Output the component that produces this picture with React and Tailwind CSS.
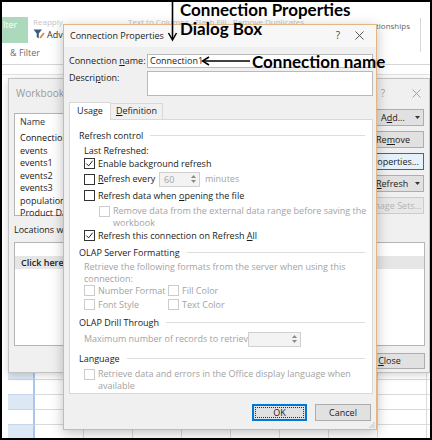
import React from "react";

function Box({ checked = false, disabled = false }) {
  return (
    <span
      className={
        disabled
          ? "relative block w-[11px] h-[11px] shrink-0 border border-[#cccccc] bg-white"
          : "relative block w-[11px] h-[11px] shrink-0 border border-[#333333] bg-white"
      }
    >
      {checked && (
        <svg viewBox="0 0 9 9" className="absolute left-0 top-0 w-[9px] h-[9px]">
          <path d="M1.4 4.6 L3.6 6.9 L7.7 1.7" fill="none" stroke="#222" strokeWidth="1" />
        </svg>
      )}
    </span>
  );
}

function CheckRow({ checked, disabled, children, className = "" }) {
  return (
    <div className={`flex items-center gap-[3px] h-[12px] ${className}`}>
      <Box checked={checked} disabled={disabled} />
      <span className={disabled ? "text-[#a3a3a3] whitespace-nowrap" : "text-[#1a1a1a] whitespace-nowrap"}>
        {children}
      </span>
    </div>
  );
}

function Heading({ children, className = "" }) {
  return (
    <div className={`flex items-center h-[12px] pl-[9px] pr-[7px] ${className}`}>
      <span className="whitespace-nowrap text-[#1a1a1a]">{children}</span>
      <span className="ml-[7px] flex-1 h-px bg-[#dddddd]" />
    </div>
  );
}

function Spin({ value = "", className = "" }) {
  return (
    <div className={`flex h-[15px] border border-[#d0d0d0] bg-[#f3f3f3] ${className}`}>
      <span className="flex-1 pl-[4px] leading-[13px] text-[#a3a3a3]">{value}</span>
      <span className="flex w-[11px] flex-col items-center justify-center gap-[2px]">
        <svg width="5" height="3" viewBox="0 0 5 3">
          <path d="M0 3 L2.5 0 L5 3Z" fill="#8a8a8a" />
        </svg>
        <svg width="5" height="3" viewBox="0 0 5 3">
          <path d="M0 0 L2.5 3 L5 0Z" fill="#8a8a8a" />
        </svg>
      </span>
    </div>
  );
}

function Caret() {
  return (
    <svg width="5" height="3" viewBox="0 0 5 3" className="shrink-0">
      <path d="M0 0 L2.5 3 L5 0Z" fill="#333" />
    </svg>
  );
}

function U({ children }) {
  return <span className="underline underline-offset-[1px]">{children}</span>;
}

function XIcon({ color = "#333" }) {
  return (
    <svg width="9" height="9" viewBox="0 0 9 9">
      <path d="M0.5 0.5 L8.5 8.5 M8.5 0.5 L0.5 8.5" stroke={color} strokeWidth="0.9" />
    </svg>
  );
}

export default function App() {
  const cols = [0, 1, 2, 3, 4, 5, 6, 7, 8];
  const rows = [0, 1, 2, 3, 4];
  return (
    <div className="relative w-[432px] h-[440px] overflow-hidden bg-white font-['Open_Sans',sans-serif] text-[9px] text-[#1a1a1a]">
      {/* ===== Excel background ===== */}
      <div className="flex flex-col w-full h-full">
        {/* ribbon */}
        <div className="relative flex h-[46px] pt-[17px] pl-[2px]">
          <div className="w-[26px] h-[26px] bg-[#acd9bb] pl-[1px] pt-[2px] text-white leading-[12px]">lter</div>
          <div className="ml-[5px] flex flex-col">
            <span className="text-[#c4c4c4] leading-[10px] text-[8px]">Reapply</span>
            <div className="mt-[1px] flex items-center gap-[2px]">
              <svg width="12" height="11" viewBox="0 0 12 11">
                <path d="M0.5 0.5 H9 L5.8 4.5 V9.5 L3.7 8 V4.5 Z" fill="#3d5a80" />
                <path d="M7 9 L11 4" stroke="#d9822b" strokeWidth="1.6" />
              </svg>
              <span className="text-[#333]">Advanced</span>
            </div>
          </div>
          <div className="ml-[40px] text-[#c4c4c4] text-[8px] leading-[10px]">Text to Columns &nbsp; Flash Fill &nbsp; Remove Duplicates</div>
          <div className="flex-1" />
          <div className="mt-[4px] flex items-start">
            <span className="text-[#666] text-[8px] leading-[10px]">What-If Relationships</span>
            <span className="ml-[10px] mr-[11px] mt-[-3px] w-px h-[34px] bg-[#d8d8d8]" />
          </div>
        </div>
        <div className="h-[19px] border-b border-[#d6d6d6] pl-[10px] text-[#6b6b6b] leading-[13px]">&amp; Filter</div>
        <div className="h-[10px] border-b border-[#e3e3e3]" />
        <div className="flex-1" />
        {/* sheet grid */}
        <div className="flex flex-col pl-[8px]">
          {rows.map((r) => (
            <div key={r} className="flex h-[15px]">
              <div
                className={
                  r % 2 === 0
                    ? "w-[27px] shrink-0 bg-[#dde8f5] border-b border-[#c6d6ea] border-r-2 border-r-[#a9c7ea]"
                    : "w-[27px] shrink-0 bg-white border-b border-[#c6d6ea] border-r-2 border-r-[#a9c7ea]"
                }
              />
              {cols.map((c) => (
                <div key={c} className="w-[49px] shrink-0 border-b border-r border-[#dadada]" />
              ))}
            </div>
          ))}
        </div>
      </div>

      {/* ===== Workbook Connections dialog (behind) ===== */}
      <div className="absolute left-[8px] top-[78px] w-[422px] h-[295px] bg-[#f0f0f0] border border-[#c2c2c2] shadow-[0_2px_8px_rgba(0,0,0,0.18)] flex flex-col">
        <div className="flex items-center h-[28px] pl-[7px]">
          <span className="text-[#9a9a9a] text-[10px]">Workbook Connections</span>
          <span className="flex-1" />
          <span className="text-[#a0a0a0] text-[10px] mr-[27px]">?</span>
          <span className="mr-[8px]">
            <XIcon color="#9a9a9a" />
          </span>
        </div>
        <div className="flex items-start pl-[5px] mt-[2px]">
          <div className="w-[340px] h-[103px] mt-[4px] bg-white border border-[#b5b5b5] pl-[5px] pt-[2px] leading-[12.5px]">
            <div className="text-[#333] h-[16px]">Name</div>
            <div className="text-[#111]">Connection</div>
            <div>events</div>
            <div>events1</div>
            <div>events2</div>
            <div>events3</div>
            <div>population</div>
            <div>Product Data</div>
          </div>
          <div className="ml-[5px] w-[65px] flex flex-col gap-[5px]">
            <div className="flex items-center h-[17px] border border-[#adadad] bg-[#e1e1e1] pl-[21px] pr-[3px]">
              <span className="flex-1">
                A<U>d</U>d...
              </span>
              <Caret />
            </div>
            <div className="flex items-center justify-center h-[17px] border border-[#adadad] bg-[#e1e1e1] pl-[3px]">
              Re<U>m</U>ove
            </div>
            <div className="flex items-center justify-center h-[17px] border border-[#0078d7] bg-[#e5f1fb]">
              <span className="pl-[4px]">Properties...</span>
            </div>
            <div className="flex items-center h-[17px] border border-[#adadad] bg-[#e1e1e1] pl-[16px] pr-[3px]">
              <span className="flex-1">
                <U>R</U>efresh
              </span>
              <Caret />
            </div>
            <div className="flex items-center justify-center h-[17px] border border-[#cccccc] bg-[#e8e8e8] text-[#b5b5b5] whitespace-nowrap">
              Manage Sets...
            </div>
          </div>
        </div>
        <div className="pl-[5px] mt-[8px] h-[12px] leading-[12px] text-[#222]">Locations where connections are used in this workbook</div>
        <div className="ml-[5px] mr-[4px] mt-[6px] h-[104px] bg-white border border-[#b5b5b5] pt-[13px]">
          <div className="h-[13px] bg-[#e6e6e6] pl-[6px] leading-[13px] font-semibold text-[#222]">
            Click here to see where the selected connections are used
          </div>
        </div>
        <div className="flex justify-end mr-[4px] mt-[7px]">
          <div className="w-[72px] h-[16px] border border-[#adadad] bg-[#e1e1e1] flex items-center justify-center pl-[1px]">
            <U>C</U>lose
          </div>
        </div>
      </div>

      {/* ===== Connection Properties dialog ===== */}
      <div className="absolute left-[63px] top-[24px] w-[314px] h-[406px] bg-[#f0f0f0] border border-[#e3b584] shadow-[0_3px_12px_rgba(0,0,0,0.25)] flex flex-col">
        <div className="flex items-center h-[22px] bg-[#f7f7f7] pl-[6px]">
          <span className="text-[9px] text-[#222]">Connection Properties</span>
          <span className="flex-1" />
          <span className="text-[#444] text-[10px] mr-[15px]">?</span>
          <span className="mr-[12px]">
            <XIcon color="#444" />
          </span>
        </div>
        {/* name */}
        <div className="flex items-center h-[14px] mt-[7px] pl-[5px]">
          <span className="w-[78px] whitespace-nowrap">
            Connection <U>n</U>ame:
          </span>
          <div className="w-[226px] h-[14px] border border-[#b9b9b9] bg-white pl-[2px] leading-[12px]">Connection1</div>
        </div>
        <div className="flex items-start mt-[3px] pl-[5px]">
          <span className="w-[78px] leading-[12px] mt-[1px]">
            Descri<U>p</U>tion:
          </span>
          <div className="w-[226px] h-[25px] border border-[#b9b9b9] bg-white" />
        </div>
        {/* tabs */}
        <div className="flex mt-[6px] pl-[5px] h-[18px]">
          <div className="w-[42px] h-[18px] bg-white border border-b-0 border-[#d9d9d9] flex items-center justify-center relative z-10">
            Usa<U>g</U>e
          </div>
          <div className="w-[52px] h-[17px] mt-[1px] bg-[#f0f0f0] border border-l-0 border-[#d9d9d9] flex items-center justify-center">
            <U>D</U>efinition
          </div>
        </div>
        {/* panel */}
        <div className="ml-[5px] w-[304px] h-[281px] mt-[-1px] bg-white border border-[#d9d9d9] flex flex-col">
          <Heading className="mt-[10px]">Refresh control</Heading>
          <div className="mt-[3px] h-[12px] pl-[14px] leading-[12px]">Last Refreshed:</div>
          <CheckRow checked className="mt-[1px] pl-[14px]">
            Enable back<U>g</U>round refresh
          </CheckRow>
          <div className="mt-[2px] flex items-center h-[15px] pl-[14px]">
            <Box />
            <span className="ml-[3px] w-[61px] whitespace-nowrap">
              <U>R</U>efresh every
            </span>
            <Spin value="60" className="w-[41px]" />
            <span className="ml-[5px] text-[#a3a3a3]">minutes</span>
          </div>
          <CheckRow className="mt-[3px] pl-[14px]">
            Refresh data when <U>o</U>pening the file
          </CheckRow>
          <div className="mt-[3px] flex items-start pl-[29px] leading-[12px]">
            <span className="mt-[1px]">
              <Box disabled />
            </span>
            <span className="ml-[3px] text-[#a3a3a3] whitespace-nowrap">
              Remove data from the external data range before saving the
              <br />
              workbook
            </span>
          </div>
          <CheckRow checked className="mt-[1px] pl-[14px]">
            Refresh this connection on Refresh <U>A</U>ll
          </CheckRow>
          <Heading className="mt-[5px]">OLAP Server Formatting</Heading>
          <div className="mt-[2px] pl-[14px] leading-[12px] text-[#a3a3a3] whitespace-nowrap">
            Retrieve the following formats from the server when using this
            <br />
            connection:
          </div>
          <div className="flex pl-[14px]">
            <CheckRow disabled className="w-[84px]">
              Number Format
            </CheckRow>
            <CheckRow disabled>Fill Color</CheckRow>
          </div>
          <div className="flex pl-[14px] mt-[2px]">
            <CheckRow disabled className="w-[84px]">
              Font Style
            </CheckRow>
            <CheckRow disabled>Text Color</CheckRow>
          </div>
          <Heading className="mt-[6px]">OLAP Drill Through</Heading>
          <div className="mt-[3px] flex items-center h-[15px] pl-[14px]">
            <span className="w-[164px] whitespace-nowrap text-[#a3a3a3]">Maximum number of records to retrieve:</span>
            <Spin className="w-[53px]" />
          </div>
          <Heading className="mt-[6px]">Language</Heading>
          <div className="mt-[3px] flex items-start pl-[14px] leading-[12px]">
            <span className="mt-[1px]">
              <Box disabled />
            </span>
            <span className="ml-[3px] text-[#a3a3a3] whitespace-nowrap">
              Retrieve data and errors in the Office display language when
              <br />
              available
            </span>
          </div>
        </div>
        {/* buttons */}
        <div className="flex justify-end gap-[8px] mt-[10px] mr-[5px]">
          <div className="w-[55px] h-[17px] border-2 border-[#0078d7] bg-[#e1e1e1] p-[1px]">
            <div className="w-full h-full border border-dotted border-[#333] flex items-center justify-center leading-none">OK</div>
          </div>
          <div className="w-[56px] h-[17px] border border-[#adadad] bg-[#e1e1e1] flex items-center justify-center">Cancel</div>
        </div>
        <div className="flex-1" />
        <div className="flex justify-end pr-[1px] pb-[1px]">
          <svg width="7" height="7" viewBox="0 0 7 7">
            <circle cx="6" cy="2" r="0.6" fill="#9a9a9a" />
            <circle cx="4" cy="4" r="0.6" fill="#9a9a9a" />
            <circle cx="6" cy="4" r="0.6" fill="#9a9a9a" />
            <circle cx="2" cy="6" r="0.6" fill="#9a9a9a" />
            <circle cx="4" cy="6" r="0.6" fill="#9a9a9a" />
            <circle cx="6" cy="6" r="0.6" fill="#9a9a9a" />
          </svg>
        </div>
      </div>

      {/* ===== Annotations ===== */}
      <svg className="absolute left-[166px] top-0" width="14" height="42" viewBox="0 0 14 42">
        <path d="M6.5 1 V39" stroke="#000" strokeWidth="1.6" />
        <path d="M2.5 33 L6.5 40 L10.5 33" fill="none" stroke="#000" strokeWidth="1.5" />
      </svg>
      <div className="absolute left-[180px] top-[0px] font-['Lato',sans-serif] font-bold text-[17px] leading-[19px] text-black">
        Connection Properties
        <br />
        Dialog Box
      </div>
      <svg className="absolute left-[201px] top-[55px]" width="50" height="12" viewBox="0 0 50 12">
        <path d="M2 6 H49" stroke="#000" strokeWidth="1.6" />
        <path d="M8 2 L1.5 6 L8 10" fill="none" stroke="#000" strokeWidth="1.5" />
      </svg>
      <div className="absolute left-[252px] top-[52px] font-['Lato',sans-serif] font-bold text-[17px] leading-[19px] text-black">
        Connection name
      </div>

      {/* frame */}
      <div className="absolute inset-0 border-2 border-black pointer-events-none" />
    </div>
  );
}
